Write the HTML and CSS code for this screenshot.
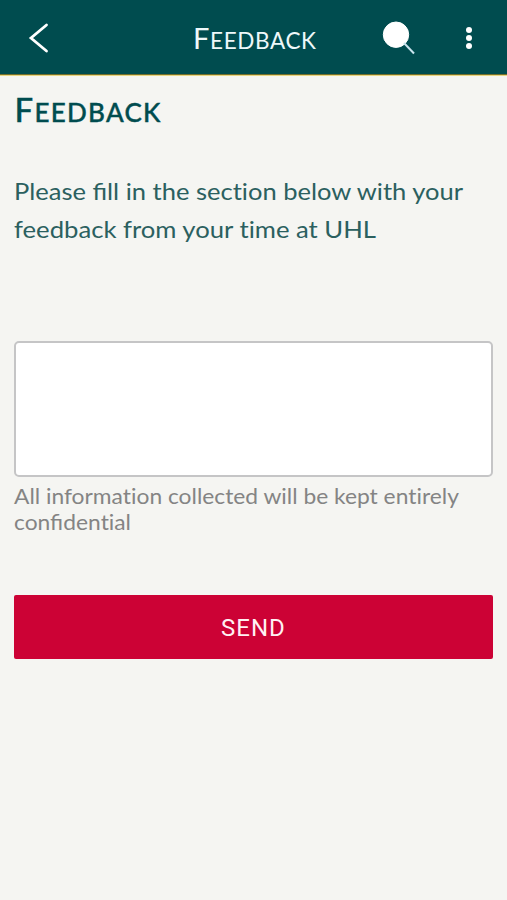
FILE: index.html
```html
<!DOCTYPE html>
<html lang="en">
<head>
<meta charset="utf-8">
<title>Feedback</title>
<link rel="stylesheet" href="styles.css">
</head>
<body>
<header class="bar">
  <svg class="back" width="22" height="30" viewBox="0 0 22 30"><path d="M18.5 2 3 15 18.5 28"/></svg>
  <div class="bar-title"><svg class="fit" width="122" height="34"><text class="name light" x="-1" y="27.5" textLength="123" lengthAdjust="spacing"><tspan class="cap">F</tspan>EEDBACK</text></svg></div>
  <svg class="search" width="34" height="36" viewBox="0 0 34 36"><circle cx="14" cy="14.7" r="12.7"/><path d="M22 23 32 33.5"/></svg>
  <svg class="more" width="8" height="24" viewBox="0 0 8 24"><circle cx="4" cy="4" r="3"/><circle cx="4" cy="12" r="3"/><circle cx="4" cy="20" r="3"/></svg>
</header>
<main class="page">
  <h1 class="heading"><svg class="fit" width="145" height="34"><text class="name dark" x="-1.5" y="25.7" textLength="146" lengthAdjust="spacing"><tspan class="cap">F</tspan>EEDBACK</text></svg></h1>
  <p class="intro"><svg class="fit" width="479" height="77"><text x="0" y="28" textLength="449" lengthAdjust="spacingAndGlyphs">Please fill in the sec<tspan class="plain">t</tspan>ion below with your</text><text x="0" y="66" textLength="362" lengthAdjust="spacingAndGlyphs">feedback from your <tspan class="plain">t</tspan>ime at UHL</text></svg></p>
  <textarea class="entry" aria-label="Feedback"></textarea>
  <p class="note"><svg class="fit" width="479" height="56"><text x="0" y="21" textLength="445" lengthAdjust="spacingAndGlyphs">All informa<tspan class="plain">t</tspan>ion collected will be kept en<tspan class="plain">t</tspan>irely</text><text x="0" y="47" textLength="117" lengthAdjust="spacingAndGlyphs">confiden<tspan class="plain">t</tspan>ial</text></svg></p>
  <button class="send">SEND</button>
</main>
</body>
</html>
```
FILE: styles.css
```css
* { box-sizing: border-box; }
body { margin: 0; min-height: 900px; background: #f5f5f2; font-family: Lato, sans-serif; }
.fit { display: block; overflow: visible; }
.bar { height: 76px; display: grid; grid-template-columns: 28px 166px 1fr 34px 49px 8px 34px; align-items: center; background: #004c4f; border-bottom: 1px solid #e9d580; box-shadow: inset 0 -1px #736f2b; }
.back { grid-column: 2; fill: none; stroke: #fff; stroke-width: 2.8; stroke-linecap: round; }
.bar-title { grid-column: 3; }
.search { grid-column: 4; fill: #fff; stroke: #fff; }
.search path { stroke: #c9e4ee; stroke-width: 2; }
.more { grid-column: 6; fill: #fff; }
.page { padding: 17px 14px 0; }
.heading { margin: 0; padding: 3px 0 0 2px; }
.name { font-size: 22.5px; }
.cap { font-size: 29px; }
.light { fill: #eef8fa; }
.dark { fill: #004c4f; font-size: 26px; font-weight: 500; }
.dark .cap { font-size: 33px; }
.dark { stroke: #004c4f; stroke-width: .4px; }
.plain { font-variant-ligatures: none; }
.intro { margin: 42px 0 0; font-size: 24px; fill: #2b605f; }
.entry { display: block; width: 479px; height: 136px; margin: 92px 0 0; border: 2px solid #c5c5c6; border-radius: 5px; background: #fff; resize: none; }
.note { margin: 6px 0 0; font-size: 21px; fill: #848484; }
.send { display: block; width: 479px; height: 64px; margin: 56px 0 0; padding: 1px 0 0; border: 0; border-radius: 2px; background: #cc0235; color: #fff0f2; font: 24px Roboto, sans-serif; letter-spacing: 1px; }
```
